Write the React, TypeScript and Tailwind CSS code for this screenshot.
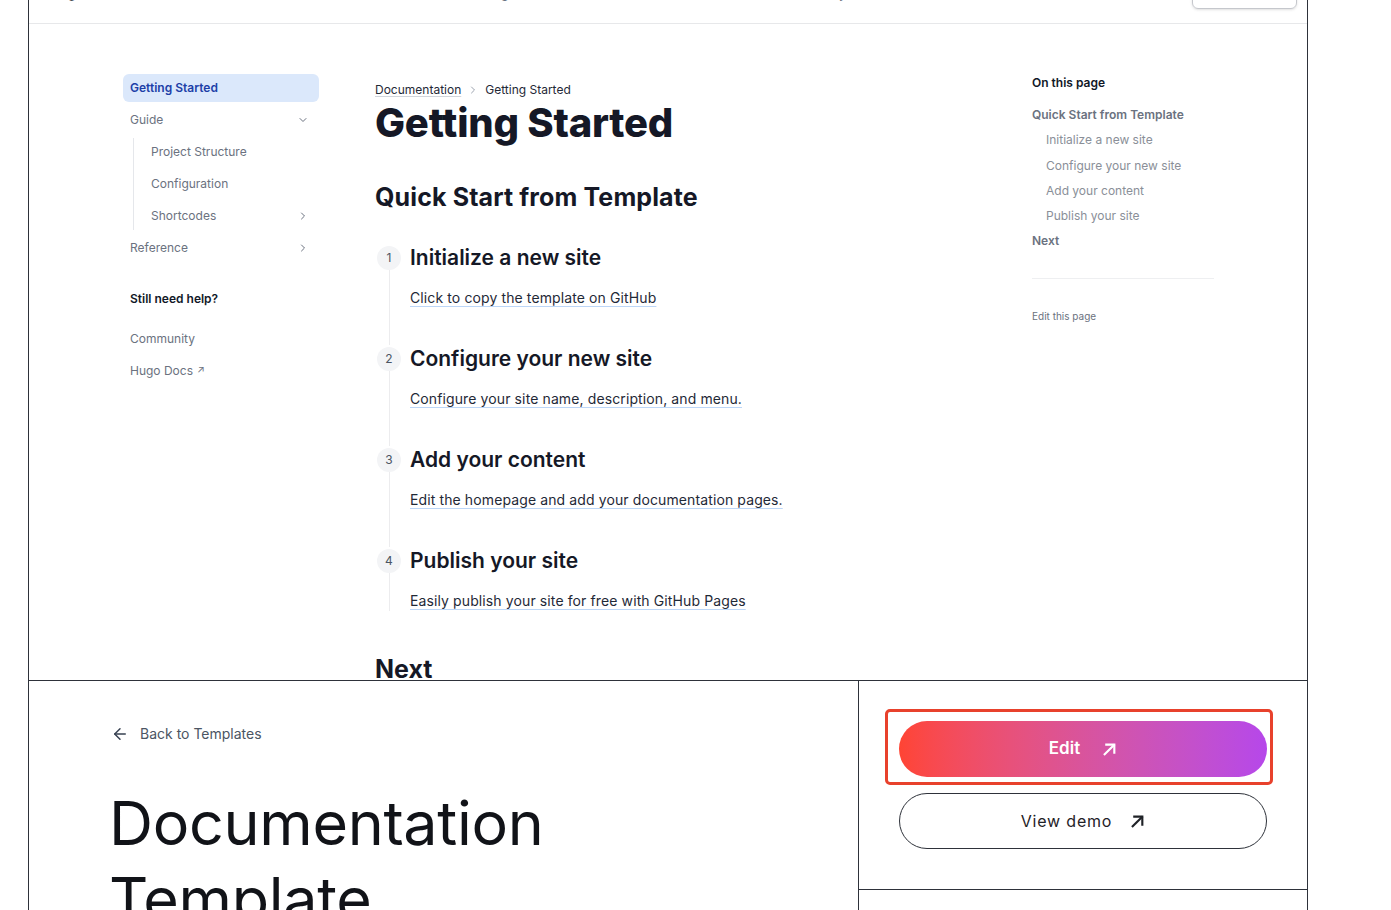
import { ChevronDown, ChevronRight, ArrowLeft } from "lucide-react";

const font = { fontFamily: "Inter, 'Noto Sans', sans-serif" };

function UpRight({ className }: { className?: string }) {
  return (
    <svg viewBox="0 0 14 14" className={className} fill="none" stroke="currentColor" strokeWidth={2} strokeLinecap="square">
      <path d="M2.5 11.5 L11 3" />
      <path d="M4 2.5 H11.5 V10" />
    </svg>
  );
}

const steps = [
  { n: 1, title: "Initialize a new site", text: "Click to copy the template on GitHub" },
  { n: 2, title: "Configure your new site", text: "Configure your site name, description, and menu." },
  { n: 3, title: "Add your content", text: "Edit the homepage and add your documentation pages." },
  { n: 4, title: "Publish your site", text: "Easily publish your site for free with GitHub Pages" },
];

function Sidebar() {
  return (
    <aside className="w-[196px] shrink-0 text-[12px] text-[#6b7280]">
      <div className="h-7 flex items-center px-[7px] rounded-md bg-[#dbe8fb] text-[#1d3fa8] font-semibold">
        Getting Started
      </div>
      <div className="h-7 mt-1 flex items-center justify-between px-[7px]">
        <span>Guide</span>
        <ChevronDown className="w-3 h-3 mr-[3px]" />
      </div>
      <div className="ml-[10px] border-l border-[#e5e7eb] mt-1">
        {["Project Structure", "Configuration", "Shortcodes"].map((t, i) => (
          <div key={t} className={`h-7 flex items-center justify-between pl-[17px] pr-[7px] ${i > 0 ? "mt-1" : ""}`}>
            <span>{t}</span>
            {t === "Shortcodes" && <ChevronRight className="w-3 h-3 mr-[3px]" />}
          </div>
        ))}
      </div>
      <div className="h-7 mt-1 flex items-center justify-between px-[7px]">
        <span>Reference</span>
        <ChevronRight className="w-3 h-3 mr-[3px]" />
      </div>
      <div className="h-7 mt-[23px] flex items-center px-[7px] text-[#111827] font-semibold">Still need help?</div>
      <div className="h-7 mt-[12px] flex items-center px-[7px]">Community</div>
      <div className="h-7 mt-1 flex items-center gap-1 px-[7px]">
        <span>Hugo Docs</span>
        <span className="text-[10px] -mt-1">↗</span>
      </div>
    </aside>
  );
}

function MainContent() {
  return (
    <main className="w-[601px] shrink-0 ml-[56px] mt-2 text-[#111827]">
      <div className="flex items-center gap-[6px] text-[12px] leading-4 text-[#1f2937]">
        <span className="underline decoration-[#d1d5db] underline-offset-2">Documentation</span>
        <ChevronRight className="w-3 h-3 text-[#9ca3af]" />
        <span>Getting Started</span>
      </div>
      <h1 className="mt-[3px] text-[40px] leading-[44px] font-extrabold tracking-[-0.006em] text-[#151826]">Getting Started</h1>
      <h2 className="mt-[36px] text-[25px] leading-8 font-bold tracking-[0.005em] text-[#151826]">Quick Start from Template</h2>
      <div className="mt-[31px]">
        {steps.map((s, i) => (
          <div key={s.n} className="flex">
            <div className="w-6 flex flex-col items-center shrink-0 ml-[2px] pt-[2px]">
              <div className="w-6 h-6 rounded-full bg-[#f3f4f6] flex items-center justify-center text-[12px] text-[#4b5563]">
                {s.n}
              </div>
              <div className="flex-1 w-px bg-[#ececee]" />
            </div>
            <div className={`pl-[9px] ${i < steps.length - 1 ? "pb-[37px]" : ""}`}>
              <h3 className="text-[21px] leading-7 font-semibold text-[#151826]">{s.title}</h3>
              <p className="mt-4 text-[14px] leading-5 tracking-[0.008em] text-[#1f2937] underline decoration-[#bcd6f7] underline-offset-[3px]">
                {s.text}
              </p>
            </div>
          </div>
        ))}
      </div>
      <h2 className="mt-[42px] text-[25px] leading-8 font-bold text-[#151826]">Next</h2>
    </main>
  );
}

function Toc() {
  return (
    <aside className="w-[182px] shrink-0 ml-[56px] pt-px text-[12px]">
      <div className="leading-4 font-semibold text-[#111827]">On this page</div>
      <div className="mt-4 leading-4 font-semibold text-[#6b7280]">Quick Start from Template</div>
      <div className="pl-[14px] text-[#8a8f98]">
        {["Initialize a new site", "Configure your new site", "Add your content", "Publish your site"].map((t) => (
          <div key={t} className="mt-[9.3px] leading-4">{t}</div>
        ))}
      </div>
      <div className="mt-[9.3px] leading-4 font-semibold text-[#6b7280]">Next</div>
      <div className="mt-[29px] h-px bg-[#eeeff1]" />
      <div className="mt-[29px] text-[10px] leading-4 text-[#6b7280]">Edit this page</div>
    </aside>
  );
}

function Preview() {
  return (
    <div className="h-[680px] overflow-hidden">
      <div className="-mt-[40px]">
        <header className="h-16 border-b border-[#e7e8ea] flex items-end pb-[14px] pl-4 pr-[10px]">
          <span className="mb-[6px] text-[16px] font-bold text-[#111827]">Hugo Docs</span>
          <nav className="ml-[334px] mb-[6px] flex gap-10 text-[13px] text-[#6b7280]">
            <span>Getting Started</span>
            <span>Guide</span>
            <span>Reference</span>
            <span>Community ↗</span>
          </nav>
          <div className="ml-auto w-[105px] h-9 rounded-md border border-[#c5c7cc] shadow-sm" />
        </header>
        <div className="flex pl-[94px] pt-[50px]">
          <Sidebar />
          <MainContent />
          <Toc />
        </div>
      </div>
    </div>
  );
}

export default function App() {
  return (
    <div className="min-h-screen bg-white" style={font}>
      <div className="ml-[28px] w-[1280px] border-x border-[#2e323a]">
        <Preview />
        <div className="flex border-t border-[#2e323a]">
          <div className="w-[830px] shrink-0 border-r border-[#2e323a] pl-[80px] pt-[42px] pb-20">
            <a className="flex items-center gap-[11px] text-[14px] text-[#4b5563]">
              <ArrowLeft className="w-[18px] h-[18px] ml-[2px] text-[#374151]" strokeWidth={2} />
              <span>Back to Templates</span>
            </a>
            <h1 className="mt-[41px] text-[61px] leading-[76px] font-normal text-[#111318] tracking-[-0.005em]">
              Documentation
              <br />
              Template
            </h1>
          </div>
          <div className="flex-1">
            <div className="p-10 flex flex-col gap-4">
              <div className="relative">
                <div className="absolute -left-[14px] -top-[12px] -right-[6px] -bottom-[8px] border-[3px] border-[#e8412c] rounded-[5px]" />
                <button className="relative w-full h-14 rounded-full bg-gradient-to-r from-[#ff4433] to-[#b647ea] text-white text-[17px] font-semibold flex items-center justify-center gap-[22px]">
                  <span>Edit</span>
                  <UpRight className="w-[15px] h-[15px]" />
                </button>
              </div>
              <button className="w-full h-14 rounded-full border border-[#2e323a] text-[#1f2227] text-[16px] tracking-[0.05em] flex items-center justify-center gap-[18px]">
                <span>View demo</span>
                <UpRight className="w-[15px] h-[15px]" />
              </button>
            </div>
            <div className="border-t border-[#2e323a] h-40" />
          </div>
        </div>
      </div>
    </div>
  );
}
